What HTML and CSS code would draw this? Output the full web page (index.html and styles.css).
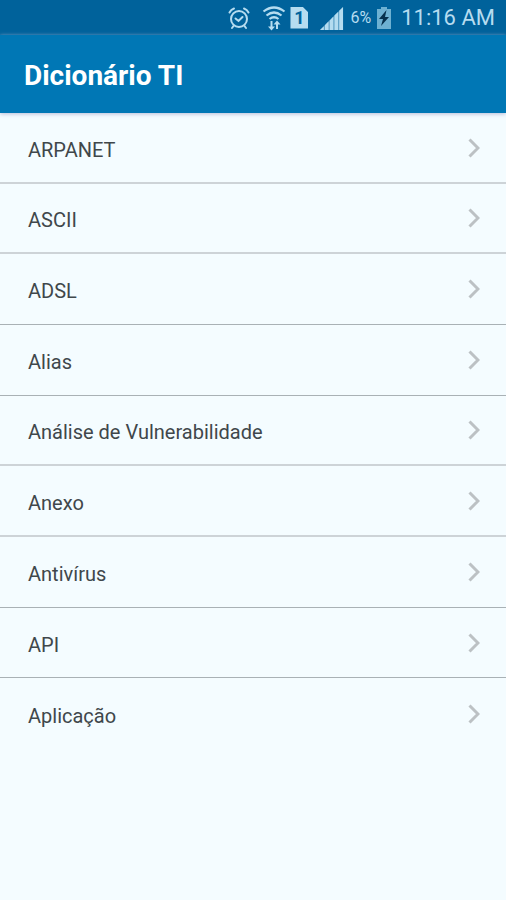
FILE: index.html
```html
<!DOCTYPE html>
<html lang="pt-BR">
<head>
<meta charset="utf-8">
<meta name="viewport" content="width=device-width, initial-scale=1">
<title>Dicionário TI</title>
<link rel="stylesheet" href="styles.css">
</head>
<body>
<div class="status">
  <svg class="icon-alarm" width="22" height="24" viewBox="0 0 22 24" fill="none" stroke="currentColor" stroke-width="2" stroke-linecap="round" aria-hidden="true">
    <circle cx="11" cy="13" r="8"/>
    <path d="M7.500 12.500l3 2.500 4-4M1.500 6.500Q3 3.500 6 2.500M20.500 6.500Q19 3.500 16 2.500M5.500 20l-1.500 2M16.500 20l1.500 2"/>
  </svg>
  <svg class="icon-wifi" width="24" height="26" viewBox="0 0 24 26" fill="none" stroke="currentColor" stroke-width="2.200" aria-hidden="true">
    <path d="M1.500 6.500Q12-1.500 22.500 6.500M4.500 10.500Q12 4.500 19.500 10.500M7.500 14Q12 10.500 16.500 14"/>
    <path d="M9.500 16v7M15 24v-7" stroke-width="2"/>
    <path d="M6 21.500h7l-3.500 4zM11.500 19.500h7L15 15.500z" fill="currentColor" stroke="none"/>
  </svg>
  <span class="sim">1</span>
  <svg class="icon-signal" width="24" height="24" viewBox="0 0 25 25" fill="currentColor" aria-hidden="true">
    <path d="M0 25l4-4v4zM5 20l4-4v9H5zM10 15l4-4v14h-4zM15 10l4-4v19h-4zM20 5l4-4v24h-4z"/>
    <path d="M0 25L24 1v24z" opacity=".4"/>
  </svg>
  <span class="percent">6%</span>
  <svg class="icon-battery" width="14" height="22" viewBox="0 0 14 22" aria-hidden="true">
    <path d="M4 0h6v2h4v20H0V2h4z" fill="#6eb1d2"/>
    <path d="M9.500 3L2 12h4l-2 7 8-9H8z" fill="#06304d"/>
  </svg>
  <time class="clock">11:16 AM</time>
</div>
<header class="bar"><h1>Dicionário TI</h1></header>
<main>
  <ul class="list">
    <li><a href="#arpanet"><span>ARPANET</span><svg class="chevron" viewBox="0 0 12 20" aria-hidden="true"><path d="M1.500 1.500L10 10l-8.500 8.500"/></svg></a></li>
    <li><a href="#ascii"><span>ASCII</span><svg class="chevron" viewBox="0 0 12 20" aria-hidden="true"><path d="M1.500 1.500L10 10l-8.500 8.500"/></svg></a></li>
    <li><a href="#adsl"><span>ADSL</span><svg class="chevron" viewBox="0 0 12 20" aria-hidden="true"><path d="M1.500 1.500L10 10l-8.500 8.500"/></svg></a></li>
    <li><a href="#alias"><span>Alias</span><svg class="chevron" viewBox="0 0 12 20" aria-hidden="true"><path d="M1.500 1.500L10 10l-8.500 8.500"/></svg></a></li>
    <li><a href="#analise"><span>Análise de Vulnerabilidade</span><svg class="chevron" viewBox="0 0 12 20" aria-hidden="true"><path d="M1.500 1.500L10 10l-8.500 8.500"/></svg></a></li>
    <li><a href="#anexo"><span>Anexo</span><svg class="chevron" viewBox="0 0 12 20" aria-hidden="true"><path d="M1.500 1.500L10 10l-8.500 8.500"/></svg></a></li>
    <li><a href="#antivirus"><span>Antivírus</span><svg class="chevron" viewBox="0 0 12 20" aria-hidden="true"><path d="M1.500 1.500L10 10l-8.500 8.500"/></svg></a></li>
    <li><a href="#api"><span>API</span><svg class="chevron" viewBox="0 0 12 20" aria-hidden="true"><path d="M1.500 1.500L10 10l-8.500 8.500"/></svg></a></li>
    <li><a href="#aplicacao"><span>Aplicação</span><svg class="chevron" viewBox="0 0 12 20" aria-hidden="true"><path d="M1.500 1.500L10 10l-8.500 8.500"/></svg></a></li>
  </ul>
</main>
</body>
</html>
```

FILE: styles.css
```css
* {
  box-sizing: border-box;
}

body {
  margin: 0;
  min-height: 100vh;
  background: #f4fcff;
  color: #40474b;
  font-family: Roboto, "Liberation Sans", sans-serif;
}

.status {
  display: flex;
  align-items: center;
  justify-content: flex-end;
  height: 35px;
  padding-right: 11px;
  background: #00629b;
  color: #b5dcf0;
}

.icon-wifi {
  margin-left: 12px;
}

.sim {
  width: 18px;
  margin-left: 4px;
  background: #b5dcf0;
  color: #00629b;
  clip-path: polygon(0 0, 12px 0, 100% 6px, 100% 100%, 0 100%);
  font-size: 18px;
  font-weight: 700;
  line-height: 22px;
  text-align: center;
}

.icon-signal {
  margin: 0 6px 0 12px;
}

.percent {
  margin-right: 6px;
  font-size: 16px;
}

.icon-battery {
  margin-right: 10px;
}

.clock {
  font-size: 22px;
}

.bar {
  position: relative;
  padding: 26px 24px 22px;
  background: #0077b5;
  box-shadow: 0 1px 4px #b8bcd8;
  color: #fff;
}

.bar h1 {
  margin: 0;
  font-size: 28px;
  font-weight: 700;
  line-height: 30px;
}

.list {
  margin: 0;
  padding: 0;
  list-style: none;
}

.list a {
  display: flex;
  align-items: center;
  justify-content: space-between;
  min-height: 71px;
  padding: 0 26px 0 28px;
  border-bottom: 1px solid #a9b1b5;
  color: inherit;
  font-size: 20px;
  line-height: 24px;
  text-decoration: none;
}

.list span {
  padding-top: 4px;
}

.list li:nth-child(3n + 2) a {
  min-height: 70px;
}

.list li:nth-child(4n + 1) a,
.list li:nth-child(4n + 2) a {
  border-bottom: 2px solid #cdd3d7;
}

.list li:last-child a {
  border-bottom: 0;
}

.chevron {
  width: 12px;
  height: 20px;
  fill: none;
  stroke: #bcc1c4;
  stroke-width: 3;
}
```
